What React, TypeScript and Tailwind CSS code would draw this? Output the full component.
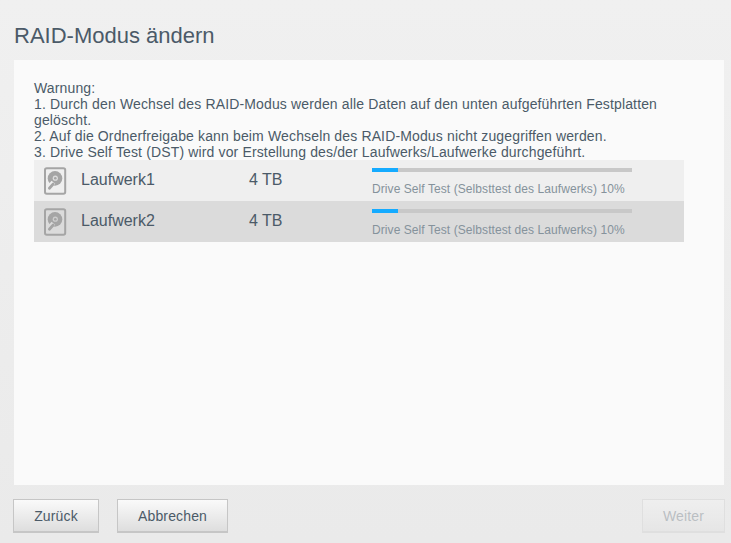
import React from "react";

type Drive = { name: string; size: string; percent: number };

const drives: Drive[] = [
  { name: "Laufwerk1", size: "4 TB", percent: 10 },
  { name: "Laufwerk2", size: "4 TB", percent: 10 },
];

function DriveIcon({ gap }: { gap: string }) {
  return (
    <svg width="24" height="28" viewBox="0 0 24 28" fill="none" className="shrink-0">
      <rect x="2" y="1.2" width="20.2" height="25.6" rx="1.8" stroke="#a5a5a5" strokeWidth="2" />
      <circle cx="12" cy="11.4" r="7.3" fill="#a5a5a5" />
      <path d="M10.4 15.2 L5 21.6" stroke={gap} strokeWidth="4.8" />
      <circle cx="12.3" cy="11.2" r="2.6" fill={gap} fillOpacity="0.75" />
      <circle cx="12.3" cy="11.2" r="1.3" fill="#a5a5a5" />
      <path d="M10.2 17 L6.4 21.2" stroke="#a5a5a5" strokeWidth="2.8" strokeLinecap="round" />
    </svg>
  );
}

function DriveRow({ drive, className, gap }: { drive: Drive; className: string; gap: string }) {
  return (
    <li className={`flex h-[41px] pl-[9px] ${className}`}>
      <div className="w-[38px] pt-[7px]">
        <DriveIcon gap={gap} />
      </div>
      <div className="w-[168px] pt-[10px] text-[16px] leading-[19px]">{drive.name}</div>
      <div className="w-[123px] pt-[10px] text-[16px] leading-[19px]">{drive.size}</div>
      <div className="w-[260px] pt-2">
        <div className="h-1 bg-[#c8c8c8]">
          <div className="h-full bg-[#15abff]" style={{ width: `${drive.percent}%` }} />
        </div>
        <p className="mt-[10px] whitespace-nowrap text-[12px] leading-[14px] tracking-[0.075px] text-[#85929b]">
          Drive Self Test (Selbsttest des Laufwerks) {drive.percent}%
        </p>
      </div>
    </li>
  );
}

function Button({ children, className = "" }: { children: React.ReactNode; className?: string }) {
  return (
    <button
      className={`h-[34px] border border-b-2 border-[#c6c6c6] bg-linear-to-b from-[#fafafa] to-[#dedede] text-[14px] leading-[16px] tracking-[0.15px] text-[#4b5a68] ${className}`}
    >
      {children}
    </button>
  );
}

export default function App() {
  return (
    <div className="flex h-[543px] w-[731px] flex-col overflow-hidden bg-linear-to-b from-[#f0f0f0] to-[#eaeaea] pl-[14px] pr-[7px] font-['Liberation_Sans',Arial,sans-serif] text-[#4b5a68]">
      <h1 className="h-[60px] pt-[23px] text-[22px] leading-[26px]">RAID-Modus ändern</h1>
      <main className="h-[425px] bg-[#fafafa] pl-5 pr-10 pt-5">
        <div className="text-[14px] leading-[16px] tracking-[0.143px]">
          <p>Warnung:</p>
          <p>
            1. Durch den Wechsel des RAID-Modus werden alle Daten auf den unten aufgeführten Festplatten
            gelöscht.
          </p>
          <p>2. Auf die Ordnerfreigabe kann beim Wechseln des RAID-Modus nicht zugegriffen werden.</p>
          <p>3. Drive Self Test (DST) wird vor Erstellung des/der Laufwerks/Laufwerke durchgeführt.</p>
        </div>
        <ul>
          {drives.map((d, i) => (
            <DriveRow
              key={d.name}
              drive={d}
              className={i % 2 ? "bg-[#dbdbdb]" : "bg-[#efefef]"}
              gap={i % 2 ? "#dbdbdb" : "#efefef"}
            />
          ))}
        </ul>
      </main>
      <footer className="-ml-px -mr-px mt-[14px] flex">
        <Button className="w-[86px]">Zurück</Button>
        <Button className="ml-[18px] w-[111px]">Abbrechen</Button>
        <Button className="ml-auto w-[83px] opacity-30">Weiter</Button>
      </footer>
    </div>
  );
}
